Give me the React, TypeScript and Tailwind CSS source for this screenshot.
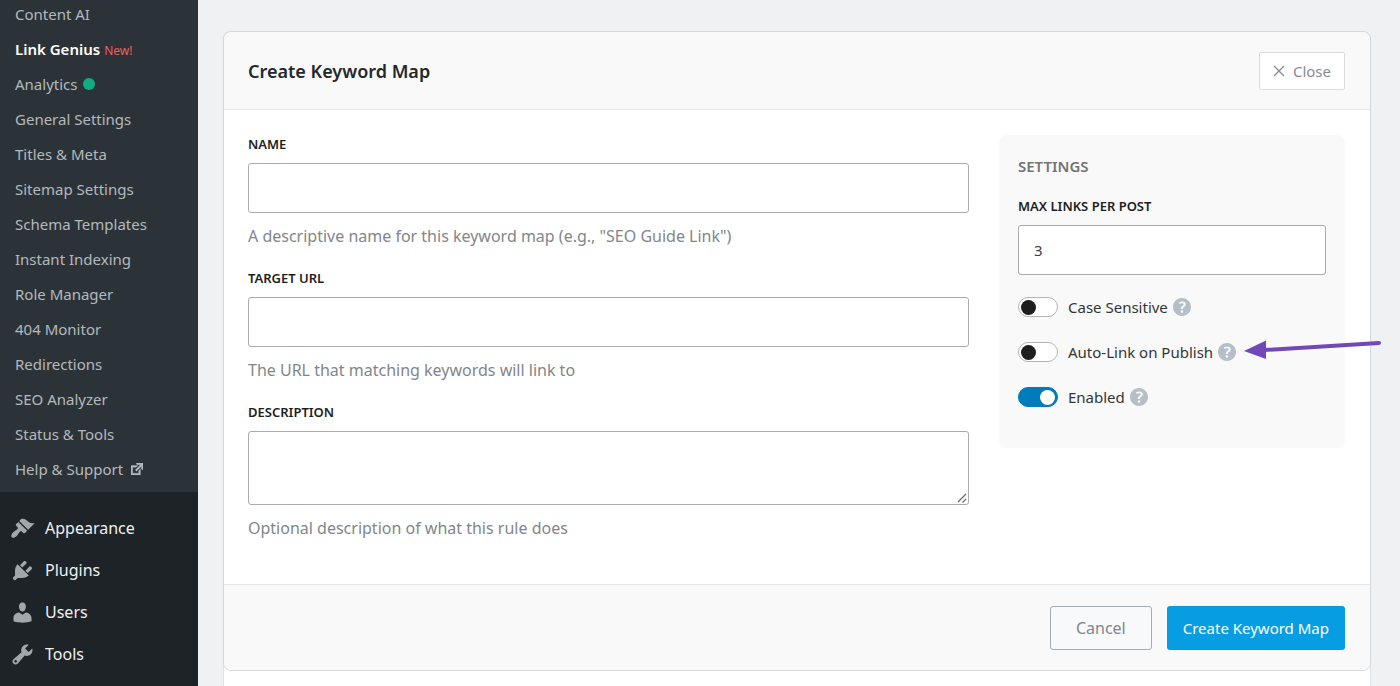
import { useState } from "react";

import clsx from "clsx";

interface IconProps {
    className?: string;
}

interface MenuItem {
    label: string;
    icon: string;
}

const submenu = [
    "Content AI",
    "Link Genius",
    "Analytics",
    "General Settings",
    "Titles & Meta",
    "Sitemap Settings",
    "Schema Templates",
    "Instant Indexing",
    "Role Manager",
    "404 Monitor",
    "Redirections",
    "SEO Analyzer",
    "Status & Tools",
    "Help & Support",
];

const menu: MenuItem[] = [
    {
        label: "Appearance",
        icon: "M14.48 11.06L7.41 3.99l1.5-1.5c.5-.56 2.3-.47 3.51.32 1.21.8 1.43 1.28 2.91 2.1 1.18.64 2.45 1.26 4.45.85zm-.71.71L6.7 4.7 4.93 6.47c-.39.39-.39 1.02 0 1.41l1.06 1.06c.39.39.39 1.03 0 1.42-.6.6-1.43 1.11-2.21 1.69-.35.26-.7.53-1.01.84C1.43 14.23.4 16.08 1.4 17.07c.99 1 2.84-.03 4.18-1.36.31-.31.58-.66.85-1.02.57-.78 1.08-1.61 1.69-2.21.39-.39 1.02-.39 1.41 0l1.06 1.06c.39.39 1.02.39 1.41 0z",
    },
    {
        label: "Plugins",
        icon: "M13.11 4.36L9.87 7.6 8 5.73l3.24-3.24c.35-.34 1.05-.2 1.56.32.52.51.66 1.21.31 1.55zm-8 1.77l.91-1.12 9.01 9.01-1.19.84c-.71.71-2.63 1.16-3.82 1.16H6.14L4.9 17.26c-.59.59-1.54.59-2.12 0-.59-.58-.59-1.53 0-2.12l1.24-1.24v-3.88c0-1.13.4-3.19 1.09-3.89zm7.26 3.97l3.24-3.24c.34-.35 1.04-.21 1.55.31.52.51.66 1.21.31 1.55l-3.24 3.25z",
    },
    {
        label: "Users",
        icon: "M10 9.25c-2.27 0-2.73-3.44-2.73-3.44C7 4.02 7.82 2 9.97 2c2.16 0 2.98 2.02 2.71 3.81 0 0-.41 3.44-2.68 3.44zm0 2.57L12.72 10c2.39 0 4.52 2.33 4.52 4.53v2.49s-3.65 1.13-7.24 1.13c-3.65 0-7.24-1.13-7.24-1.13v-2.49c0-2.25 1.94-4.48 4.47-4.48z",
    },
    {
        label: "Tools",
        icon: "M16.68 9.77c-1.34 1.34-3.3 1.67-4.95.99l-5.41 6.52c-.99.99-2.59.99-3.58 0s-.99-2.59 0-3.57l6.52-5.42c-.68-1.65-.35-3.61.99-4.95 1.28-1.28 3.12-1.62 4.72-1.06l-2.89 2.89 2.82 2.82 2.86-2.87c.53 1.58.18 3.39-1.08 4.65zM3.81 16.21c.4.39 1.04.39 1.43 0 .4-.4.4-1.04 0-1.43-.39-.4-1.03-.4-1.43 0-.39.39-.39 1.03 0 1.43z",
    },
];

const ExternalIcon = ({ className }: IconProps) => (
    <svg viewBox="3 3 14 14" className={className} fill="currentColor" stroke="currentColor" strokeWidth="0.4" aria-hidden="true">
        <path d="M9 3h8v8l-2-1V6.92l-5.6 5.59-1.41-1.41L14.08 5H10zm3 12v-3l2-2v7H3V6h8L9 8H5v7h7z" />
    </svg>
);

const HelpIcon = ({ className }: IconProps) => (
    <svg viewBox="3 3 14 14" className={className} fill="currentColor" aria-hidden="true">
        <path d="M17 10c0-3.87-3.14-7-7-7-3.87 0-7 3.13-7 7s3.13 7 7 7c3.86 0 7-3.13 7-7zm-6.3 1.48H9.14v-.43c0-.38.08-.7.24-.98s.46-.57.88-.89c.41-.29.68-.53.81-.71.14-.18.2-.39.2-.62 0-.25-.09-.44-.28-.58-.19-.13-.45-.19-.79-.19-.58 0-1.25.19-2 .57l-.64-1.28c.87-.49 1.8-.74 2.77-.74.81 0 1.45.2 1.92.58.48.39.71.91.71 1.55 0 .43-.09.8-.29 1.11-.19.32-.57.67-1.11 1.06-.38.28-.61.49-.71.63-.1.15-.15.34-.15.57v.35zm-1.47 2.74c-.18-.17-.27-.42-.27-.73 0-.33.08-.58.26-.75s.43-.25.77-.25c.32 0 .57.09.75.26s.27.42.27.74c0 .3-.09.55-.27.72-.18.18-.43.27-.75.27-.33 0-.58-.09-.76-.26z" />
    </svg>
);

const Arrow = () => (
    <svg
        viewBox="0 0 144 24"
        className="pointer-events-none absolute -top-1 left-full ml-1.5 h-6 w-36"
        aria-hidden="true"
    >
        <path d="M22 11L137 4" stroke="#7248b9" strokeWidth="4" strokeLinecap="round" />
        <path d="M2 12L24 1.500L24 20Z" fill="#7248b9" />
    </svg>
);

const Sidebar = () => (
    <nav className="w-[198px] shrink-0 bg-[#1d2327]">
        <ul className="flex flex-col gap-[15px] bg-[#2c3338] pt-1 pb-[13px] pl-[15px] text-[15px] leading-5 text-[#b4b9be]">
            {submenu.map((label) => (
                <li key={label} className="h-5">
                    <a
                        href="#"
                        className={clsx(
                            "flex items-baseline whitespace-nowrap hover:text-white",
                            label === "Link Genius" && "font-semibold text-white"
                        )}
                    >
                        {label}
                        {label === "Link Genius" && (
                            <span className="ml-1 text-xs leading-4 font-normal text-[#ed5e5e]">New!</span>
                        )}
                        {label === "Analytics" && (
                            <span className="ml-1.5 size-3 self-center rounded-full bg-[#10ac84]" />
                        )}
                        {label === "Help & Support" && <ExternalIcon className="ml-2 size-3 self-center" />}
                    </a>
                </li>
            ))}
        </ul>
        <ul className="pt-[15px] text-[16px] leading-6 text-[#f0f0f1]">
            {menu.map(({ label, icon }) => (
                <li key={label}>
                    <a href="#" className="flex h-[42px] items-center gap-[10px] pl-[10px]">
                        <svg viewBox="0 0 20 20" className="size-[25px] text-[#a2a7ac]" fill="currentColor" aria-hidden="true">
                            <path d={icon} />
                        </svg>
                        {label}
                    </a>
                </li>
            ))}
        </ul>
    </nav>
);

interface FieldProps {
    id: string;
    label: string;
    help: string;
    multiline?: boolean;
}

const Field = ({ id, label, help, multiline }: FieldProps) => (
    <div className="flex flex-col">
        <label htmlFor={id} className="text-[13px] leading-[18px] font-semibold text-[#1e1e1e] uppercase">
            {label}
        </label>
        {multiline ? (
            <div className="relative mt-[10px] flex">
                <textarea
                    id={id}
                    className="h-[74px] w-full resize-none rounded-[3px] border border-[#a9abae] bg-white px-4 py-3 text-[16px]"
                />
                <svg
                    viewBox="0 0 10 10"
                    className="pointer-events-none absolute right-0.5 bottom-0.5 size-[10px]"
                    stroke="#6e6e6e"
                    strokeWidth="1.3"
                    aria-hidden="true"
                >
                    <path d="M1 9L9 1M5.500 9.500L9 6" />
                </svg>
            </div>
        ) : (
            <input
                id={id}
                type="text"
                className="mt-[10px] h-[50px] rounded-[3px] border border-[#a9abae] bg-white px-4 text-[16px]"
            />
        )}
        <p className="mt-[11px] text-[16px] leading-6 text-[#82868a]">{help}</p>
    </div>
);

interface ToggleProps {
    id: string;
    label: string;
    defaultOn?: boolean;
    pointed?: boolean;
}

const Toggle = ({ id, label, defaultOn = false, pointed }: ToggleProps) => {
    const [on, setOn] = useState(defaultOn);

    return (
        <div className="flex h-5 items-center">
            <input
                id={id}
                type="checkbox"
                role="switch"
                checked={on}
                onChange={() => setOn(!on)}
                className={clsx(
                    "flex h-5 w-10 shrink-0 appearance-none items-center rounded-full border px-0.5 before:size-[15px] before:rounded-full",
                    on
                        ? "justify-end border-[#007cba] bg-[#007cba] before:bg-white"
                        : "border-[#b4b4b4] bg-white before:bg-[#1e1e1e]"
                )}
            />
            <label htmlFor={id} className="ml-[10px] text-[15px] leading-6 whitespace-nowrap text-[#333638]">
                {label}
            </label>
            <span className="relative ml-[5px]">
                <HelpIcon className="size-[18px] text-[#b5bfc9]" />
                {pointed && <Arrow />}
            </span>
        </div>
    );
};

const App = () => {
    return (
        <div className="flex min-h-screen bg-[#f0f1f3] font-['Noto_Sans',sans-serif]">
            <Sidebar />
            <main className="flex min-w-0 flex-1 flex-col pt-[31px] pr-[29px] pl-[25px]">
                <div className="flex-1 rounded-t-lg bg-white shadow-[inset_1px_0_#dfe0e2,inset_-1px_0_#dfe0e2]">
                    <form className="rounded-lg border border-[#d5d7d9] bg-white" onSubmit={(e) => e.preventDefault()}>
                        <header className="flex h-[78px] items-center justify-between rounded-t-lg border-b border-[#e5e6e7] bg-[#f9f9f9] pr-[25px] pl-6">
                            <h2 className="text-lg leading-7 font-semibold text-[#23282d]">Create Keyword Map</h2>
                            <button
                                type="button"
                                className="flex h-[38px] items-center gap-2 rounded-[2px] border border-[#dcdcdc] bg-white px-[13px] text-[15px] leading-6 text-[#868b90]"
                            >
                                <svg viewBox="0 0 12 12" className="size-3" fill="none" stroke="currentColor" aria-hidden="true">
                                    <path d="M1 1l10 10M11 1L1 11" strokeWidth="1.3" />
                                </svg>
                                Close
                            </button>
                        </header>

                        <div className="flex items-start gap-[30px] pt-[25px] pr-[25px] pb-11 pl-6">
                            <div className="flex min-w-0 flex-1 flex-col gap-[21px]">
                                <Field
                                    id="name"
                                    label="Name"
                                    help={'A descriptive name for this keyword map (e.g., "SEO Guide Link")'}
                                />
                                <Field id="target" label="Target URL" help="The URL that matching keywords will link to" />
                                <Field
                                    id="description"
                                    label="Description"
                                    help="Optional description of what this rule does"
                                    multiline
                                />
                            </div>

                            <section className="flex w-[346px] shrink-0 flex-col rounded-lg bg-[#f9f9f9] px-[19px] pt-[19px] pb-[41px]">
                                <h3 className="text-[15px] leading-6 font-semibold text-[#757575] uppercase">Settings</h3>
                                <label
                                    htmlFor="max-links"
                                    className="mt-[19px] text-[13px] leading-[18px] font-semibold text-[#1e1e1e] uppercase"
                                >
                                    Max links per post
                                </label>
                                <input
                                    id="max-links"
                                    type="text"
                                    inputMode="numeric"
                                    defaultValue="3"
                                    className="mt-[10px] h-[50px] rounded-[3px] border border-[#a9abae] bg-white px-[15px] text-[15px] text-[#3c4146]"
                                />
                                <div className="mt-[22px] flex flex-col gap-[25px]">
                                    <Toggle id="case-sensitive" label="Case Sensitive" />
                                    <Toggle id="auto-link" label="Auto-Link on Publish" pointed />
                                    <Toggle id="enabled" label="Enabled" defaultOn />
                                </div>
                            </section>
                        </div>

                        <footer className="flex h-[86px] items-center justify-end gap-[15px] rounded-b-lg border-t border-[#e5e6e7] bg-[#f9f9f9] pr-[25px] pl-6">
                            <button
                                type="button"
                                className="h-11 rounded-[3px] border border-[#a5abb2] bg-[#f8f9fb] px-[25px] text-[16px] leading-6 text-[#7f868d]"
                            >
                                Cancel
                            </button>
                            <button
                                type="submit"
                                className="h-11 rounded-[3px] bg-[#069de3] px-4 text-[15px] leading-6 text-white"
                            >
                                Create Keyword Map
                            </button>
                        </footer>
                    </form>
                </div>
            </main>
        </div>
    );
};

export default App;
